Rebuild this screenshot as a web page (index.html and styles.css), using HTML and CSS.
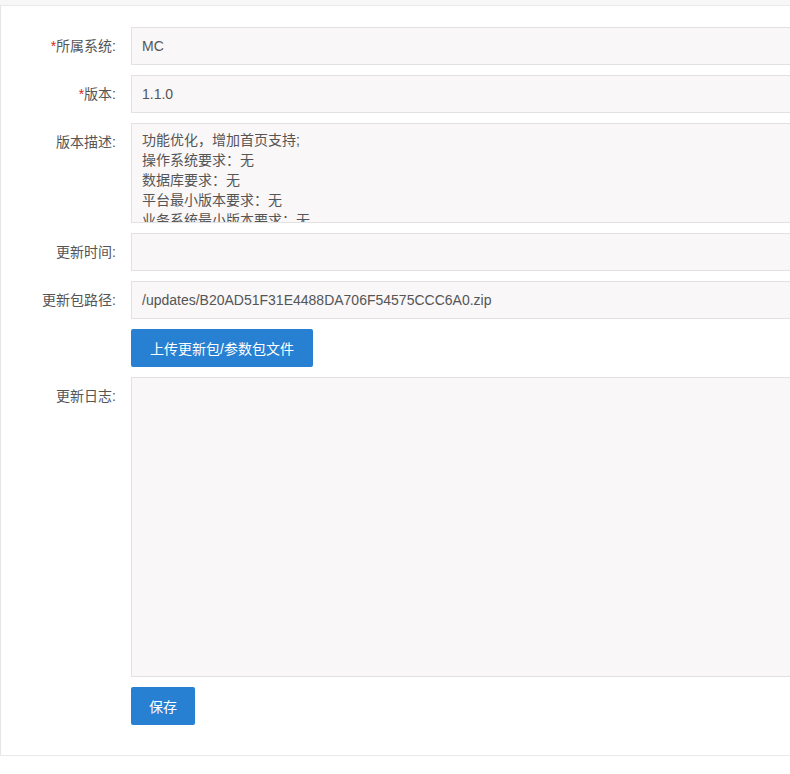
FILE: index.html
```html
<!DOCTYPE html>
<html lang="zh-CN">
<head>
<meta charset="utf-8">
<title>版本编辑</title>
<link rel="stylesheet" href="styles.css">
</head>
<body>
<div class="topband"></div>
<div class="card">
  <form class="form">
    <div class="row">
      <label class="label"><span class="req">*</span>所属系统:</label>
      <div class="field"><input class="input" type="text" value="MC"></div>
    </div>
    <div class="row">
      <label class="label"><span class="req">*</span>版本:</label>
      <div class="field"><input class="input" type="text" value="1.1.0"></div>
    </div>
    <div class="row">
      <label class="label label-top">版本描述:</label>
      <div class="field"><textarea class="textarea desc">功能优化，增加首页支持;
操作系统要求：无
数据库要求：无
平台最小版本要求：无
业务系统最小版本要求：无</textarea></div>
    </div>
    <div class="row">
      <label class="label">更新时间:</label>
      <div class="field"><input class="input" type="text" value=""></div>
    </div>
    <div class="row">
      <label class="label">更新包路径:</label>
      <div class="field"><input class="input" type="text" value="/updates/B20AD51F31E4488DA706F54575CCC6A0.zip"></div>
    </div>
    <div class="row">
      <div class="label"></div>
      <div class="field"><button class="btn btn-upload" type="button">上传更新包/参数包文件</button></div>
    </div>
    <div class="row">
      <label class="label label-top">更新日志:</label>
      <div class="field"><textarea class="textarea log"></textarea></div>
    </div>
    <div class="row">
      <div class="label"></div>
      <div class="field"><button class="btn" type="button">保存</button></div>
    </div>
  </form>
</div>
</body>
</html>
```

FILE: styles.css
```css
html, body {
  margin: 0;
  padding: 0;
  background: #ffffff;
  overflow: hidden;
}
body {
  font-family: "Liberation Sans", "Noto Sans CJK SC", sans-serif;
  font-size: 14px;
  color: #555555;
}
.topband {
  height: 5px;
  background: #f7f7f7;
}
.card {
  border-top: 1px solid #e9e9e9;
  border-left: 1px solid #e6e6e6;
  border-bottom: 1px solid #e9e9e9;
  padding: 21px 0 30px 0;
  overflow: hidden;
}
.form {
  display: flex;
  flex-direction: column;
  gap: 10px;
  margin-right: -20px;
}
.row {
  display: flex;
  align-items: flex-start;
}
.label {
  flex: 0 0 130px;
  box-sizing: border-box;
  padding-right: 15px;
  text-align: right;
  line-height: 38px;
  color: #555555;
  font-size: 14px;
  white-space: nowrap;
}
.label-top {
  line-height: 20px;
  padding-top: 9px;
}
.req {
  color: #e02020;
}
.field {
  flex: 1;
  min-width: 0;
}
.input, .textarea {
  display: block;
  width: 100%;
  box-sizing: border-box;
  border: 1px solid #e2e2e2;
  background: #f9f7f8;
  color: #555555;
  font-family: "Liberation Sans", "Noto Sans CJK SC", sans-serif;
  font-size: 14px;
  margin: 0;
  outline: none;
  border-radius: 0;
}
.input {
  height: 38px;
  padding: 0 10px;
}
.textarea {
  padding: 6px 10px;
  line-height: 20px;
  resize: none;
  overflow: hidden;
}
.desc {
  height: 100px;
}
.log {
  height: 300px;
}
.btn {
  display: inline-block;
  height: 38px;
  padding: 0 18px;
  border: none;
  border-radius: 2px;
  background: #2780d2;
  color: #ffffff;
  font-family: "Liberation Sans", "Noto Sans CJK SC", sans-serif;
  font-size: 14px;
  cursor: pointer;
}
.btn-upload {
  padding: 0 19px;
}
```
